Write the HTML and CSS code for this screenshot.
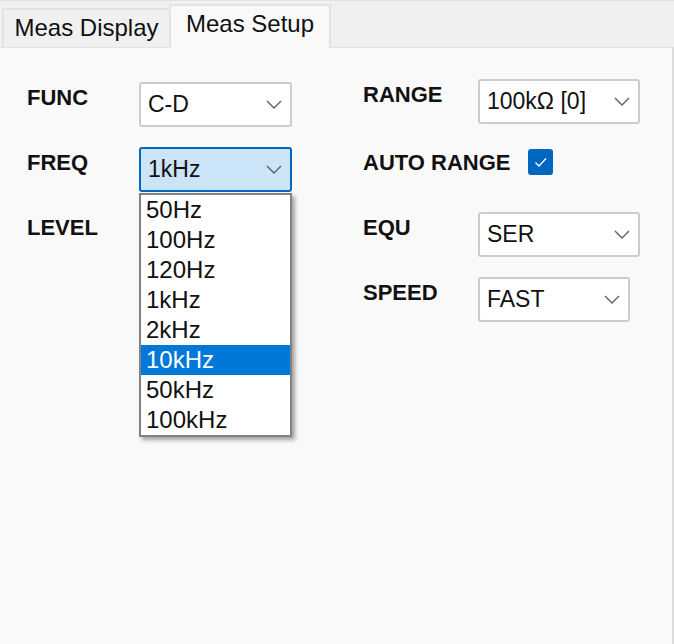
FILE: index.html
```html
<!DOCTYPE html>
<html>
<head>
<meta charset="utf-8">
<link rel="stylesheet" href="styles.css">
</head>
<body>
<div class="app">
  <div class="tabbar">
    <div class="tab tab-display">Meas Display</div>
    <div class="tab tab-setup active">Meas Setup</div>
  </div>
  <div class="panel">
    <div class="col col-left">
      <div class="row">
        <div class="label">FUNC</div>
        <div class="select w153"><span>C-D</span><svg class="chev" viewBox="0 0 16 9"><path d="M1 1 L8 8 L15 1"/></svg></div>
      </div>
      <div class="row">
        <div class="label">FREQ</div>
        <div class="select-wrap">
          <div class="select w153 open"><span>1kHz</span><svg class="chev" viewBox="0 0 16 9"><path d="M1 1 L8 8 L15 1"/></svg></div>
          <ul class="dropdown">
            <li>50Hz</li>
            <li>100Hz</li>
            <li>120Hz</li>
            <li>1kHz</li>
            <li>2kHz</li>
            <li class="sel">10kHz</li>
            <li>50kHz</li>
            <li>100kHz</li>
          </ul>
        </div>
      </div>
      <div class="row">
        <div class="label">LEVEL</div>
        <div class="select w153"></div>
      </div>
    </div>
    <div class="col col-right">
      <div class="row">
        <div class="label rlabel">RANGE</div>
        <div class="select w162"><span>100kΩ [0]</span><svg class="chev" viewBox="0 0 16 9"><path d="M1 1 L8 8 L15 1"/></svg></div>
      </div>
      <div class="row row-auto">
        <div class="label label-auto">AUTO RANGE</div>
        <div class="check"><svg viewBox="0 0 25 26"><path d="M7.5 13.5 L11 17 L18 9.5"/></svg></div>
      </div>
      <div class="row row-equ">
        <div class="label rlabel">EQU</div>
        <div class="select w162"><span>SER</span><svg class="chev" viewBox="0 0 16 9"><path d="M1 1 L8 8 L15 1"/></svg></div>
      </div>
      <div class="row">
        <div class="label rlabel">SPEED</div>
        <div class="select w152"><span>FAST</span><svg class="chev" viewBox="0 0 16 9"><path d="M1 1 L8 8 L15 1"/></svg></div>
      </div>
    </div>
  </div>
</div>
</body>
</html>
```
FILE: styles.css
```css
* { box-sizing: border-box; }
html, body { margin: 0; padding: 0; }
body {
  width: 674px;
  height: 644px;
  overflow: hidden;
  background: #f0f0f0;
  font-family: "Liberation Sans", Arial, sans-serif;
  color: #111;
}
.app {
  display: flex;
  flex-direction: column;
  height: 644px;
}
.tabbar {
  height: 47px;
  border-top: 1px solid #e3e3e3;
  display: flex;
  align-items: flex-end;
  padding-left: 2px;
  background: #f0f0f0;
}
.tab {
  font-size: 24px;
  line-height: 26px;
  text-align: center;
  padding-top: 5px;
  border-top: 2px solid #e3e3e3;
  border-left: 2px solid #e3e3e3;
  color: #111;
}
.tab-display {
  width: 167px;
  height: 39px;
  background: #f0f0f0;
}
.tab-setup {
  width: 162px;
  height: 44px;
  background: #f9f9f9;
  border-right: 2px solid #e3e3e3;
  margin-bottom: -1px;
  position: relative;
  z-index: 2;
}
.panel {
  flex: 1;
  background: #f9f9f9;
  border-top: 1px solid #e3e3e3;
  border-right: 2px solid #dcdcdc;
  width: 674px;
  display: flex;
  padding-left: 27px;
}
.col {
  display: flex;
  flex-direction: column;
}
.col-left {
  padding-top: 34px;
  width: 336px;
  gap: 20px;
}
.col-right {
  padding-top: 31px;
}
.row {
  display: flex;
  align-items: flex-start;
  height: 45px;
}
.col-right .row + .row { margin-top: 20px; }
.col-right .row-equ { margin-top: 23px !important; }
.label {
  font-size: 22px;
  font-weight: bold;
  line-height: 26px;
  padding-top: 3px;
  width: 112px;
}
.rlabel { width: 115px; }
.label-auto { width: auto; padding-top: 6px; }
.select {
  height: 45px;
  border: 2px solid #cccccc;
  border-radius: 3px;
  background: #ffffff;
  display: flex;
  align-items: center;
  justify-content: space-between;
  padding: 0 8px 0 7px;
  font-size: 23px;
  line-height: 41px;
  color: #111;
}
.w153 { width: 153px; }
.w162 { width: 162px; }
.w152 { width: 152px; }
.chev {
  width: 16px;
  height: 9px;
  fill: none;
  stroke: #5f5f5f;
  stroke-width: 1.4;
}
.select.open {
  border-color: #0067c0;
  background: #cce4f7;
}
.select-wrap {
  position: relative;
}
.dropdown {
  position: absolute;
  top: 46px;
  left: 0;
  width: 153px;
  margin: 0;
  padding: 0;
  list-style: none;
  background: #ffffff;
  border: 2px solid #828282;
  box-shadow: 3px 3px 4px rgba(0,0,0,0.35);
  z-index: 5;
}
.dropdown li {
  height: 30px;
  font-size: 24px;
  line-height: 30px;
  padding-left: 5px;
  color: #111;
}
.dropdown li.sel {
  background: #0078d7;
  color: #ffffff;
}
.check {
  width: 25px;
  height: 26px;
  margin-left: 17px;
  margin-top: 5px;
  border-radius: 3px;
  background: #0067c0;
}
.check svg {
  width: 25px;
  height: 26px;
  display: block;
  fill: none;
  stroke: #ffffff;
  stroke-width: 1.3;
}
```
